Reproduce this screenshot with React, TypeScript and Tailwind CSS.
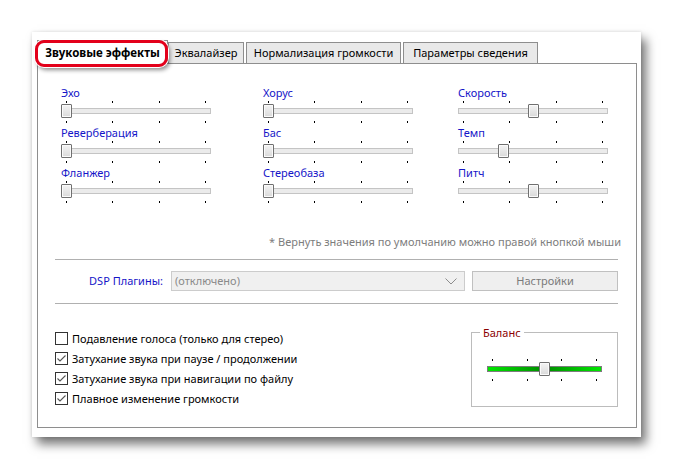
import React from "react";

function Ticks({ className = "" }: { className?: string }) {
  return (
    <div className={"flex justify-between px-[5px] h-[2px] " + className}>
      <div className="w-px h-[2px] bg-black" />
      <div className="w-px h-[2px] bg-black" />
      <div className="w-px h-[2px] bg-black" />
      <div className="w-px h-[2px] bg-black" />
    </div>
  );
}

function Thumb({ left }: { left: number }) {
  return (
    <div
      className="absolute top-0 h-[14px] w-[11px] rounded-[1px] border border-[#707070] bg-gradient-to-b from-[#f4f4f4] to-[#d9d9d9] shadow-[inset_0_0_0_1px_#fafafa]"
      style={{ left }}
    />
  );
}

function Slider({ value, width, green = false }: { value: number; width: number; green?: boolean }) {
  const left = Math.round(value * (width - 11));
  return (
    <div className="flex flex-col" style={{ width }}>
      <Ticks />
      <div className="relative mt-[1px] h-[14px]">
        {green ? (
          <div className="absolute left-0 right-0 top-[4px] h-[6px] border border-[#7c7c7c] bg-[linear-gradient(to_right,#00e800,#009000_48%,#009000_52%,#00e800)]" />
        ) : (
          <div className="absolute left-0 right-0 top-[4px] h-[6px] border border-[#c4c4c4] bg-[#ebebeb]" />
        )}
        <Thumb left={left} />
      </div>
      <Ticks className="mt-[3px]" />
    </div>
  );
}

function SliderBlock({ label, value }: { label: string; value: number }) {
  return (
    <div className="flex h-[40px] w-[150px] flex-col">
      <div className="h-[15px] text-[11px] leading-[15px] text-[#1515c8]">{label}</div>
      <div className="mt-[1px]">
        <Slider value={value} width={150} />
      </div>
    </div>
  );
}

function Check({ checked, label }: { checked: boolean; label: string }) {
  return (
    <div className="flex h-[20px] items-center">
      <div className="flex h-[13px] w-[13px] items-center justify-center border border-[#333333] bg-white">
        {checked && (
          <svg width="11" height="11" viewBox="0 0 11 11">
            <polyline points="1.5,5.5 4,8 9.5,2.5" fill="none" stroke="#555555" strokeWidth="1.1" />
          </svg>
        )}
      </div>
      <span className="ml-[4px] text-[11px] leading-[15px] text-black">{label}</span>
    </div>
  );
}

export default function App() {
  return (
    <div className="h-[469px] w-[673px] overflow-hidden bg-white font-['Noto_Sans',sans-serif]">
      <div className="relative ml-[32px] mt-[32px] h-[405px] w-[609px] bg-white pl-[5px] pr-[4px] pt-[8px] shadow-[5px_7px_10px_rgba(0,0,0,0.55),0_0_3px_rgba(0,0,0,0.12)]">
        {/* tabs */}
        <div className="flex h-[23px] items-end">
          <div className="relative z-10 -mb-px flex h-[24px] w-[131px] items-center justify-center border border-b-0 border-[#8e8e8e] bg-white text-[11.5px] font-bold text-black">
            Звуковые эффекты
          </div>
          <div className="flex h-[21px] w-[76px] items-center justify-center border border-b-0 border-[#8e8e8e] bg-[#e9e9e9] text-[11px] text-black">
            Эквалайзер
          </div>
          <div className="ml-[2px] flex h-[21px] w-[155px] items-center justify-center border border-b-0 border-[#8e8e8e] bg-[#e9e9e9] text-[11px] text-black">
            Нормализация громкости
          </div>
          <div className="ml-[2px] flex h-[21px] w-[135px] items-center justify-center border border-b-0 border-[#8e8e8e] bg-[#e9e9e9] text-[11px] text-black">
            Параметры сведения
          </div>
        </div>

        {/* pane */}
        <div className="flex h-[365px] w-[600px] flex-col border border-[#8e8e8e] bg-white">
          <div className="ml-[23px] mt-[21px] flex">
            <div className="flex flex-col">
              <SliderBlock label="Эхо" value={0} />
              <SliderBlock label="Реверберация" value={0} />
              <SliderBlock label="Фланжер" value={0} />
            </div>
            <div className="ml-[52px] flex flex-col">
              <SliderBlock label="Хорус" value={0} />
              <SliderBlock label="Бас" value={0} />
              <SliderBlock label="Стереобаза" value={0} />
            </div>
            <div className="ml-[45px] flex flex-col">
              <SliderBlock label="Скорость" value={0.5} />
              <SliderBlock label="Темп" value={0.29} />
              <SliderBlock label="Питч" value={0.5} />
            </div>
          </div>

          <div className="mr-[15px] mt-[29px] h-[16px] text-right text-[11px] leading-[16px] text-[#7d7d7d]">
            * Вернуть значения по умолчанию можно правой кнопкой мыши
          </div>

          <div className="ml-[17px] mr-[18px] mt-[9px] h-px bg-[#b0b0b0]" />

          <div className="ml-[17px] mt-[11px] flex h-[20px] items-center">
            <div className="w-[108px] text-right text-[11px] text-[#1515c8]">DSP Плагины:</div>
            <div className="ml-[8px] flex h-[20px] w-[294px] items-center justify-between border border-[#cccccc] bg-[#f0f0f0] pl-[3px] pr-[7px]">
              <span className="text-[11px] text-[#8a8a8a]">(отключено)</span>
              <svg width="12" height="7" viewBox="0 0 12 7">
                <polyline points="0.5,0.5 6,6 11.5,0.5" fill="none" stroke="#8c8c8c" strokeWidth="1" />
              </svg>
            </div>
            <div className="ml-[7px] flex h-[20px] w-[146px] items-center justify-center border border-[#c0c0c0] bg-[#efefef] text-[11px] text-[#7a7a7a]">
              Настройки
            </div>
          </div>

          <div className="ml-[17px] mr-[18px] mt-[12px] h-px bg-[#b0b0b0]" />

          <div className="flex">
            <div className="ml-[17px] mt-[24px] flex flex-col">
              <Check checked={false} label="Подавление голоса (только для стерео)" />
              <Check checked={true} label="Затухание звука при паузе / продолжении" />
              <Check checked={true} label="Затухание звука при навигации по файлу" />
              <Check checked={true} label="Плавное изменение громкости" />
            </div>
            <div className="relative ml-auto mr-[18px] mt-[28px] h-[75px] w-[147px] border border-[#bcbcbc]">
              <span className="absolute -top-[8px] left-[8px] bg-white px-[3px] text-[11px] leading-[16px] text-[#8b0000]">
                Баланс
              </span>
              <div className="ml-[15px] mt-[26px]">
                <Slider value={0.5} width={115} green />
              </div>
            </div>
          </div>
        </div>

        {/* red annotation highlight */}
        <div className="pointer-events-none absolute left-[3px] top-[8px] z-20 h-[27px] w-[133px] rounded-[9px] border-[3px] border-[#e3001b] shadow-[inset_0_0_0_1px_#ffffff,0_0_0_1px_#ffffff,2px_3px_4px_rgba(0,0,0,0.45)]" />
      </div>
    </div>
  );
}
